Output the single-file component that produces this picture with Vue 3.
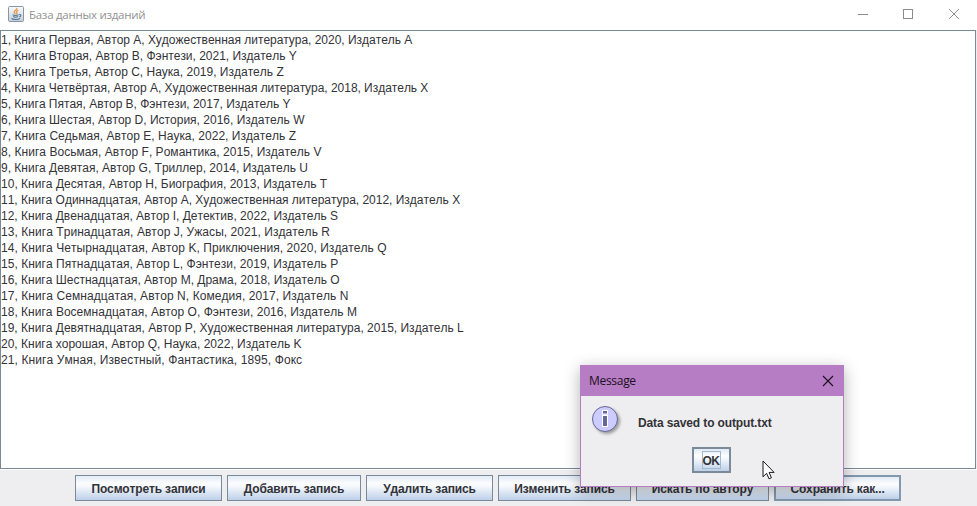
<script setup>
// `tracking` is the extra width, in pixels, spread over the whole line
const records = [
  { text: '1, Книга Первая, Автор A, Художественная литература, 2020, Издатель A', tracking: -1.5 },
  { text: '2, Книга Вторая, Автор B, Фэнтези, 2021, Издатель Y', tracking: -1 },
  { text: '3, Книга Третья, Автор C, Наука, 2019, Издатель Z', tracking: 0 },
  { text: '4, Книга Четвёртая, Автор A, Художественная литература, 2018, Издатель X', tracking: -2.5 },
  { text: '5, Книга Пятая, Автор B, Фэнтези, 2017, Издатель Y', tracking: -1 },
  { text: '6, Книга Шестая, Автор D, История, 2016, Издатель W', tracking: 0 },
  { text: '7, Книга Седьмая, Автор E, Наука, 2022, Издатель Z', tracking: 2 },
  { text: '8, Книга Восьмая, Автор F, Романтика, 2015, Издатель V', tracking: 2 },
  { text: '9, Книга Девятая, Автор G, Триллер, 2014, Издатель U', tracking: 0 },
  { text: '10, Книга Десятая, Автор H, Биография, 2013, Издатель T', tracking: 1 },
  { text: '11, Книга Одиннадцатая, Автор A, Художественная литература, 2012, Издатель X', tracking: -1 },
  { text: '12, Книга Двенадцатая, Автор I, Детектив, 2022, Издатель S', tracking: 0 },
  { text: '13, Книга Тринадцатая, Автор J, Ужасы, 2021, Издатель R', tracking: 3 },
  { text: '14, Книга Четырнадцатая, Автор K, Приключения, 2020, Издатель Q', tracking: 3 },
  { text: '15, Книга Пятнадцатая, Автор L, Фэнтези, 2019, Издатель P', tracking: 2 },
  { text: '16, Книга Шестнадцатая, Автор M, Драма, 2018, Издатель O', tracking: 0 },
  { text: '17, Книга Семнадцатая, Автор N, Комедия, 2017, Издатель N', tracking: 4 },
  { text: '18, Книга Восемнадцатая, Автор O, Фэнтези, 2016, Издатель M', tracking: 1 },
  { text: '19, Книга Девятнадцатая, Автор P, Художественная литература, 2015, Издатель L', tracking: 0.5 },
  { text: '20, Книга хорошая, Автор Q, Наука, 2022, Издатель K', tracking: 0 },
  { text: '21, Книга Умная, Известный, Фантастика, 1895, Фокс', tracking: 5 },
]

const spacing = ({ text, tracking }) => (tracking / text.length).toFixed(3) + 'px'

const actions = [
  { label: 'Посмотреть записи', width: 147 },
  { label: 'Добавить запись', width: 134 },
  { label: 'Удалить запись', width: 127 },
  { label: 'Изменить запись', width: 133 },
  { label: 'Искать по автору', width: 133 },
  { label: 'Сохранить как...', width: 127, active: true },
]
</script>

<template>
  <div class="window">
    <header class="titlebar">
      <svg class="app-icon" width="16" height="16" viewBox="0 0 16 16">
        <defs>
          <linearGradient id="tile" x1="0" y1="0" x2="0" y2="1">
            <stop offset="0" stop-color="#fafbfc" />
            <stop offset="1" stop-color="#c3ced9" />
          </linearGradient>
        </defs>
        <rect x=".5" y=".5" width="15" height="15" rx="1" fill="url(#tile)" stroke="#8795a5" />
        <path d="M8.8 2C9.3 4 5.6 4.7 6.1 6.2 6.3 7 7.2 7.5 7.3 8.2M10.3 4.2C8.5 4.8 8.3 5.6 8.8 6.3 9.2 7 8.8 7.6 8.2 8" fill="none" stroke="#e8964a" stroke-width="1.3" />
        <path d="M4.6 8.8C6 9.6 9 9.5 10.6 8.8M5.2 10.6C6.6 11.4 8.7 11.2 10 10.6M3.6 12.4C4.5 13.8 10.6 13.8 12 12.3M11.2 8.6C13.4 8.2 13.3 10.4 11.3 11" fill="none" stroke="#507596" stroke-width="1.1" />
      </svg>
      <h1 class="title">База данных изданий</h1>
      <svg class="controls" width="104" height="12" viewBox="0 0 104 12" fill="none" stroke="#8c8c8c">
        <path d="M1 6.5H11" />
        <rect x="46.500" y="1.500" width="9" height="9" />
        <path d="M92 1L102 11M102 1L92 11" />
      </svg>
    </header>

    <main class="listing">
      <p
        v-for="record in records"
        :key="record.text"
        class="record"
        :style="{ letterSpacing: spacing(record) }"
      >{{ record.text }}</p>
    </main>

    <footer class="toolbar">
      <button
        v-for="action in actions"
        :key="action.label"
        class="btn"
        :class="{ active: action.active }"
        :style="{ width: action.width + 'px' }"
      >{{ action.label }}</button>
    </footer>

    <section class="dialog">
      <header class="dialog-bar">
        <span>Message</span>
        <svg width="12" height="12" viewBox="0 0 12 12" fill="none" stroke="#1b1020" stroke-width="1.1">
          <path d="M1 1L11 11M11 1L1 11" />
        </svg>
      </header>
      <div class="dialog-body">
        <div class="message">
          <svg class="info" width="34" height="34" viewBox="0 0 34 34">
            <circle cx="14" cy="14" r="12.500" fill="#ccccff" stroke="#666699" />
            <path d="M11 5H17V9.500H11ZM11 10H17V22H11Z" fill="#fff" />
            <path d="M12 6H16V8.500H12ZM12 11H16V21H12Z" fill="#666699" />
          </svg>
          <span class="message-text">Data saved to output.txt</span>
        </div>
        <button class="btn ok"><span class="focus">OK</span></button>
      </div>
      <svg class="cursor" width="14" height="21" viewBox="0 0 14 21">
        <path d="M1 1V16.800L4.600 13.300L7 18.800L9.400 17.800L7.100 12.400H12.100Z" fill="#fff" stroke="#16161e" />
      </svg>
    </section>
  </div>
</template>

<style>
body {
  margin: 0;
  overflow: hidden;
}
</style>

<style scoped>
.window {
  position: relative;
  display: flex;
  flex-direction: column;
  box-sizing: border-box;
  width: 977px;
  height: 506px;
  overflow: hidden;
  background: #eeeef0;
  font-family: "Liberation Sans", Arial, sans-serif;
  font-size: 12px;
  font-kerning: none;
  color: #333338;
}
.titlebar {
  display: flex;
  flex: none;
  align-items: center;
  box-sizing: border-box;
  height: 30px;
  padding: 0 16px 2px 8px;
  background: #fff;
}
.title {
  margin: 2px 0 0 5px;
  font: 400 11.5px/16px "Open Sans", "Noto Sans", sans-serif;
  letter-spacing: -0.28px;
  color: #929292;
}
.controls {
  margin-left: auto;
}
.listing {
  flex: none;
  box-sizing: border-box;
  width: 976px;
  height: 439px;
  padding: 1px 0 0;
  border: 1px solid #7a8a99;
  background: #fff;
}
.record {
  margin: 0;
  line-height: 16px;
  white-space: pre;
}
.toolbar {
  display: flex;
  flex: none;
  gap: 5px;
  box-sizing: border-box;
  height: 37px;
  padding: 5px 0 0 75px;
  border-top: 1px solid #fff;
}
.btn {
  box-sizing: border-box;
  flex: none;
  height: 26px;
  padding: 1px 0 0;
  border: 1px solid #7a8a99;
  border-radius: 0;
  background: linear-gradient(#e2eaf5 0%, #fbfcfe 30%, #f6f9fd 42%, #bdd0e9 100%);
  font: 700 12px/22px "Liberation Sans", Arial, sans-serif;
  font-kerning: none;
  letter-spacing: -0.15px;
  color: #333338;
  text-align: center;
  white-space: nowrap;
}
.btn.active {
  border: 2px solid #8298ae;
  line-height: 20px;
}
.dialog {
  position: absolute;
  left: 580px;
  top: 365px;
  box-sizing: border-box;
  width: 264px;
  height: 122px;
  border: 1px solid #b67cc4;
  background: #eeeef0;
  box-shadow: 0 4px 15px rgba(0, 0, 0, 0.3);
}
.dialog-bar {
  display: flex;
  align-items: center;
  justify-content: space-between;
  box-sizing: border-box;
  height: 30px;
  padding: 0 9px 0 8px;
  background: #b67cc4;
  font: 400 12px/16px "Open Sans", "Noto Sans", sans-serif;
  letter-spacing: -0.3px;
  color: #1b1020;
}
.dialog-body {
  display: flex;
  flex-direction: column;
  align-items: center;
}
.message {
  display: flex;
  align-items: center;
  align-self: stretch;
  height: 51px;
  padding-left: 10px;
}
.info {
  filter: drop-shadow(2px 2px 1.500px rgba(0, 0, 0, 0.35));
}
.message-text {
  margin: 2px 0 0 13px;
  font-weight: 700;
  letter-spacing: -0.13px;
}
.ok {
  display: flex;
  align-items: center;
  justify-content: center;
  width: 39px;
  margin-right: 2px;
  border-width: 2px;
  padding: 0;
}
.focus {
  width: 17px;
  height: 16px;
  border: 1px solid #a3b8cc;
  line-height: 18px;
  letter-spacing: -0.6px;
}
.cursor {
  position: absolute;
  left: 181px;
  top: 94px;
}
</style>
